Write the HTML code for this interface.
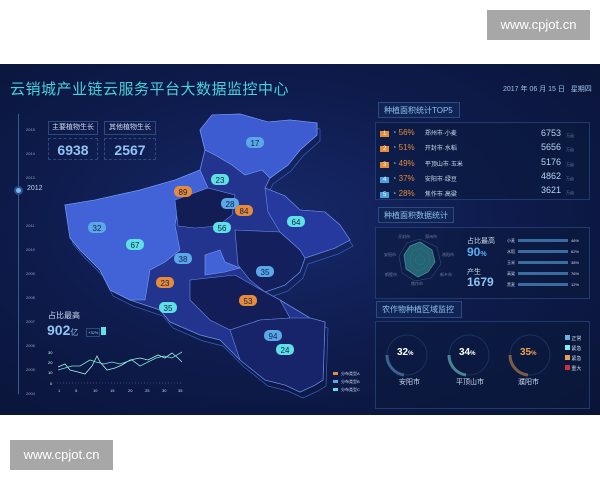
<!DOCTYPE html>
<html><head><meta charset="utf-8"><style>
*{margin:0;padding:0;box-sizing:border-box}
body{width:600px;height:480px;background:#fff;position:relative;overflow:hidden;font-family:"Liberation Sans","Noto Sans CJK SC",sans-serif}
.wm{position:absolute;background:#a7a7a7;color:#fff;font-size:13px;text-align:center;line-height:30px}
#dash{position:absolute;left:0;top:64px;width:600px;height:351px;background:radial-gradient(ellipse at 45% 45%,#17296a 0%,#0e1b4c 50%,#0a1436 100%);overflow:hidden}
.a{position:absolute;white-space:nowrap}
.hd{position:absolute;border:1px solid #2b4a7e;background:#102456;color:#8fc0ee;font-size:8px;padding:2px 5px;white-space:nowrap}
.pn{position:absolute;border:1px solid #1f3a6c;background:rgba(10,25,60,.5)}
</style></head><body>
<div class="wm" style="left:487px;top:10px;width:103px;height:30px">www.cpjot.cn</div>
<div class="wm" style="left:10px;top:440px;width:103px;height:30px">www.cpjot.cn</div>
<div id="dash">
<div class="a" style="left:10px;top:14px;font-size:15px;color:#45d2dc;letter-spacing:0.5px">云销城产业链云服务平台大数据监控中心</div>
<div class="a" style="left:503px;top:20px;font-size:7px;color:#9cc0e6">2017 年 06 月 15 日 &nbsp; 星期四</div>
<div class="a" style="left:18px;top:50px;width:1px;height:280px;background:#3a5a8c"></div>
<div class="a" style="left:14px;top:122px;width:9px;height:9px;border-radius:50%;background:#7ab8f0;border:2px solid #2a4f8a"></div>
<div class="a" style="left:27px;top:121px;font-size:7px;color:#b8d4f0">2012</div>
<div class="a" style="left:26px;top:54px;font-size:4px;color:#8aa4c8;line-height:24px">2015<br>2014<br>2013<br><br>2011<br>2010<br>2009<br>2008<br>2007<br>2006<br>2005<br>2004</div>
<div class="a" style="left:48px;top:57px;width:50px;height:14px;border:1px solid #2b4a7e;font-size:7px;color:#cde;line-height:12px;text-align:center">主要植物生长</div>
<div class="a" style="left:104px;top:57px;width:52px;height:14px;border:1px solid #2b4a7e;font-size:7px;color:#cde;line-height:12px;text-align:center">其他植物生长</div>
<div class="a" style="left:48px;top:74px;width:50px;height:22px;border:1px dashed #2b4a7e;font-size:14px;font-weight:bold;color:#8fc4f4;text-align:center;line-height:22px">6938</div>
<div class="a" style="left:104px;top:74px;width:52px;height:22px;border:1px dashed #2b4a7e;font-size:14px;font-weight:bold;color:#8fc4f4;text-align:center;line-height:22px">2567</div>
<svg class="a" style="left:0;top:0" width="600" height="351" viewBox="0 64 600 351">
<g fill="none" stroke="#3a60c0" stroke-width="0.7" transform="translate(3,6)"><path d="M212 115L240 114 268 122 290 120 317 123 317 135 300 150 288 165 270 178 265 188 285 196 300 210 325 212 340 225 350 240 335 248 305 258 300 272 285 285 265 292 280 300 310 318 325 322 323 380 315 385 300 392 285 385 265 380 240 360 220 340 200 335 170 322 160 310 130 300 110 290 100 270 80 250 70 238 65 205 95 200 140 190 175 180 200 170 205 150 200 130Z"/></g>
<path d="M212 115L240 114 268 122 290 120 317 123 317 135 300 150 288 165 270 178 265 188 285 196 300 210 325 212 340 225 350 240 335 248 305 258 300 272 285 285 265 292 280 300 310 318 325 322 323 380 315 385 300 392 285 385 265 380 240 360 220 340 200 335 170 322 160 310 130 300 110 290 100 270 80 250 70 238 65 205 95 200 140 190 175 180 200 170 205 150 200 130Z" fill="#22348e" stroke="#6a8ee8" stroke-width="0.8"/>
<path d="M65 205L95 200 140 190 175 180 200 170 208 188 180 200 175 225 180 250 165 262 150 270 145 300 130 300 110 290 100 270 80 250 70 238Z" fill="#4262d8" stroke="#7a9ef0" stroke-width="0.6"/>
<path d="M212 115L240 114 268 122 290 120 317 123 317 135 300 150 288 165 270 178 262 170 245 175 232 165 215 155 205 150 200 130Z" fill="#3d5cd2" stroke="#7a9ef0" stroke-width="0.6"/>
<path d="M175 200L208 188 235 195 232 215 218 226 195 228 178 226Z" fill="#121c55" stroke="#6a8ee8" stroke-width="0.6"/>
<path d="M235 230L280 232 300 250 305 258 300 272 285 285 265 292 250 280 238 265Z" fill="#141f5e" stroke="#6a8ee8" stroke-width="0.6"/>
<path d="M205 255L220 250 225 262 240 268 225 272 205 275Z" fill="#4262d8" stroke="#7a9ef0" stroke-width="0.6"/>
<path d="M190 280L235 275 265 292 280 300 290 318 260 320 230 330 210 320 190 300Z" fill="#131d58" stroke="#6a8ee8" stroke-width="0.6"/>
<path d="M230 330L260 320 290 318 310 318 325 322 323 380 315 385 300 392 285 385 265 380 240 360Z" fill="#17246a" stroke="#6a8ee8" stroke-width="0.6"/>
<path d="M265 188L285 196 300 210 325 212 340 225 350 240 335 248 305 258 300 250 280 232 268 212Z" fill="#26399e" stroke="#6a8ee8" stroke-width="0.6"/>
<g font-size="8" text-anchor="middle" font-family="Liberation Sans">
<g fill="#5aa8e8"><rect x="246" y="137" width="18" height="11" rx="5"/><rect x="88" y="222" width="18" height="11" rx="5"/><rect x="221" y="198" width="18" height="11" rx="5"/><rect x="174" y="253" width="18" height="11" rx="5"/><rect x="256" y="266" width="18" height="11" rx="5"/><rect x="264" y="330" width="18" height="11" rx="5"/></g>
<g fill="#5fe0e4"><rect x="211" y="174" width="18" height="11" rx="5"/><rect x="213" y="222" width="18" height="11" rx="5"/><rect x="287" y="216" width="18" height="11" rx="5"/><rect x="126" y="239" width="18" height="11" rx="5"/><rect x="159" y="302" width="18" height="11" rx="5"/><rect x="276" y="344" width="18" height="11" rx="5"/></g>
<g fill="#e58b3a"><rect x="174" y="186" width="18" height="11" rx="5"/><rect x="235" y="205" width="18" height="11" rx="5"/><rect x="156" y="277" width="18" height="11" rx="5"/><rect x="239" y="295" width="18" height="11" rx="5"/></g>
<g fill="#0f2050"><text x="255" y="146">17</text><text x="220" y="183">23</text><text x="183" y="195">89</text><text x="230" y="207">28</text><text x="244" y="214">84</text><text x="222" y="231">56</text><text x="296" y="225">64</text><text x="97" y="231">32</text><text x="135" y="248">67</text><text x="183" y="262">38</text><text x="265" y="275">35</text><text x="165" y="286">23</text><text x="248" y="304">53</text><text x="168" y="311">35</text><text x="273" y="339">94</text><text x="285" y="353">24</text></g>
</g>
<g fill="#cfe" font-size="4"><text x="48" y="354">30</text><text x="48" y="364">20</text><text x="48" y="374">10</text><text x="50" y="385">0</text></g>
<line x1="57" y1="383" x2="182" y2="383" stroke="#5a7ab0" stroke-width="0.5" stroke-dasharray="1 2"/>
<polyline points="58,367 65,364 70,370 78,372 85,374 92,366 97,356 100,362 107,370 115,368 122,365 130,360 140,358 148,360 158,355 165,358 172,353 178,358 182,362" fill="none" stroke="#a8f0e8" stroke-width="0.8"/>
<polyline points="58,370 65,368 72,366 80,366 90,360 96,362 104,364 112,362 120,364 132,360 140,366 148,362 156,358 164,356 172,358 182,352" fill="none" stroke="#7fe0d8" stroke-width="0.8"/>
<g fill="#cde" font-size="4"><text x="58" y="392">1</text><text x="75" y="392">5</text><text x="93" y="392">10</text><text x="110" y="392">15</text><text x="128" y="392">20</text><text x="145" y="392">25</text><text x="162" y="392">30</text><text x="178" y="392">35</text></g>
<rect x="333" y="372" width="5" height="3" fill="#e58b3a"/><rect x="333" y="380" width="5" height="3" fill="#5aa8e8"/><rect x="333" y="388" width="5" height="3" fill="#5fe0e4"/>
<g fill="#cde" font-size="4"><text x="341" y="375">分布类型A</text><text x="341" y="383">分布类型B</text><text x="341" y="391">分布类型C</text></g>
<g transform="translate(420,260)" stroke-width="0.5">
<polygon points="0,-21 17,-13 21,4 11,18 -5,21 -18,13 -21,-4 -13,-17" fill="none" stroke="#6a96c0"/>
<polygon points="0,-18 12,-10 15,2 8,12 -2,17 -14,9 -16,-5 -10,-14" fill="#3ab0aa" stroke="#8ff6ee" stroke-width="0.8"/>
<polygon points="0,-12 8,-7 10,2 5,8 -2,11 -9,6 -10,-3 -7,-9" fill="none" stroke="#9ae"/>
<polygon points="0,-6 4,-3 5,1 3,4 -1,5 -4,3 -5,-1 -3,-4" fill="none" stroke="#9ae"/>
</g>
<g fill="#cde" font-size="4"><text x="398" y="238">开封市</text><text x="425" y="238">郑州市</text><text x="384" y="256">安阳市</text><text x="442" y="256">洛阳市</text><text x="385" y="276">鹤壁市</text><text x="440" y="276">新乡市</text><text x="411" y="285">焦作市</text></g>
<g fill="none" stroke-width="3">
<circle cx="407" cy="355" r="20" stroke="#2a4a78" stroke-width="1"/><path d="M387 355A20 20 0 0 0 404 375" stroke="#6aa8e8"/>
<circle cx="469" cy="355" r="20" stroke="#2a4a78" stroke-width="1"/><path d="M449 355A20 20 0 0 0 466 375" stroke="#7ff0f0"/>
<circle cx="530" cy="355" r="20" stroke="#2a4a78" stroke-width="1"/><path d="M510 355A20 20 0 0 0 528 375" stroke="#e8a050"/>
</g>
</svg>
<div class="a" style="left:48px;top:246px;font-size:8px;color:#cde">占比最高</div>
<div class="a" style="left:47px;top:258px;font-size:14px;font-weight:bold;color:#8fc4f4">902<span style="font-size:8px;font-weight:normal">亿</span></div>
<div class="a" style="left:86px;top:264px;font-size:4px;color:#9cf;border:1px solid #2b4a7e;padding:1px">+32%</div>
<div class="a" style="left:101px;top:263px;width:5px;height:8px;background:#5fe0e4"></div>
<div class="hd" style="left:378px;top:38px;width:82px;height:16px">种植面积统计TOP5</div>
<div class="pn" style="left:375px;top:58px;width:215px;height:78px"></div>
<div class="a" style="left:380px;top:62px;font-size:8px;line-height:14.3px">
<div><span style="background:#e58b3a;color:#fff;font-size:6px;padding:0 3px">1</span> <span style="color:#5a9ad8">◔</span> <span style="color:#e58b3a;display:inline-block;width:24px">56%</span> <span style="color:#cde;font-size:6px">郑州市·小麦</span></div>
<div><span style="background:#e58b3a;color:#fff;font-size:6px;padding:0 3px">2</span> <span style="color:#5a9ad8">◔</span> <span style="color:#e58b3a;display:inline-block;width:24px">51%</span> <span style="color:#cde;font-size:6px">开封市·水稻</span></div>
<div><span style="background:#e58b3a;color:#fff;font-size:6px;padding:0 3px">3</span> <span style="color:#5a9ad8">◔</span> <span style="color:#e58b3a;display:inline-block;width:24px">49%</span> <span style="color:#cde;font-size:6px">平顶山市·玉米</span></div>
<div><span style="background:#4aa0e0;color:#fff;font-size:6px;padding:0 3px">4</span> <span style="color:#5a9ad8">◔</span> <span style="color:#e58b3a;display:inline-block;width:24px">37%</span> <span style="color:#cde;font-size:6px">安阳市·绿豆</span></div>
<div><span style="background:#4aa0e0;color:#fff;font-size:6px;padding:0 3px">5</span> <span style="color:#5a9ad8">◔</span> <span style="color:#e58b3a;display:inline-block;width:24px">28%</span> <span style="color:#cde;font-size:6px">焦作市·高粱</span></div>
</div>
<div class="a" style="left:541px;top:62px;font-size:9px;line-height:14.3px;color:#b8d4f0">6753<br>5656<br>5176<br>4862<br>3621</div>
<div class="a" style="left:566px;top:65px;font-size:4px;line-height:14.3px;color:#6080a8">万亩<br>万亩<br>万亩<br>万亩<br>万亩</div>
<div class="hd" style="left:378px;top:143px;width:76px;height:16px">种植面积数据统计</div>
<div class="pn" style="left:375px;top:163px;width:215px;height:72px"></div>
<div class="a" style="left:467px;top:172px;font-size:7px;color:#cde">占比最高</div>
<div class="a" style="left:467px;top:181px;font-size:12px;font-weight:bold;color:#5ab0f0">90<span style="font-size:7px">%</span></div>
<div class="a" style="left:467px;top:203px;font-size:7px;color:#cde">产生</div>
<div class="a" style="left:467px;top:211px;font-size:12px;font-weight:bold;color:#8fc4f4">1679</div>
<div class="a" style="left:507px;top:171px;font-size:4px;line-height:11px;color:#cde">小麦<br>水稻<br>玉米<br>高粱<br>黑麦</div>
<div class="a" style="left:518px;top:173px;width:50px;line-height:11px">
<div style="height:11px;padding-top:2px"><div style="height:3px;background:#3a6ca0"></div></div>
<div style="height:11px;padding-top:2px"><div style="height:3px;background:#3a6ca0"></div></div>
<div style="height:11px;padding-top:2px"><div style="height:3px;background:#3a6ca0"></div></div>
<div style="height:11px;padding-top:2px"><div style="height:3px;background:#3a6ca0"></div></div>
<div style="height:11px;padding-top:2px"><div style="height:3px;background:#3a6ca0"></div></div>
</div>
<div class="a" style="left:571px;top:171px;font-size:4px;line-height:11px;color:#cde">46%<br>62%<br>38%<br>76%<br>12%</div>
<div class="hd" style="left:376px;top:237px;width:86px;height:17px">农作物种植区域监控</div>
<div class="pn" style="left:375px;top:257px;width:215px;height:88px"></div>
<div class="a" style="left:397px;top:283px;font-size:10px;font-weight:bold;color:#fff">32<span style="font-size:6px">%</span></div>
<div class="a" style="left:459px;top:283px;font-size:10px;font-weight:bold;color:#fff">34<span style="font-size:6px">%</span></div>
<div class="a" style="left:520px;top:283px;font-size:10px;font-weight:bold;color:#f0a050">35<span style="font-size:6px">%</span></div>
<div class="a" style="left:399px;top:313px;font-size:7px;color:#cde">安阳市</div>
<div class="a" style="left:456px;top:313px;font-size:7px;color:#cde">平顶山市</div>
<div class="a" style="left:518px;top:313px;font-size:7px;color:#cde">濮阳市</div>
<div class="a" style="left:565px;top:270px;font-size:5px;line-height:10px;color:#cde">
<div><span style="display:inline-block;width:5px;height:5px;background:#6ab0e0"></span> 正常</div>
<div><span style="display:inline-block;width:5px;height:5px;background:#7ff0f0"></span> 紧急</div>
<div><span style="display:inline-block;width:5px;height:5px;background:#e8a050"></span> 紧急</div>
<div><span style="display:inline-block;width:5px;height:5px;background:#d03040"></span> 重大</div>
</div>
</div>
</body></html>
